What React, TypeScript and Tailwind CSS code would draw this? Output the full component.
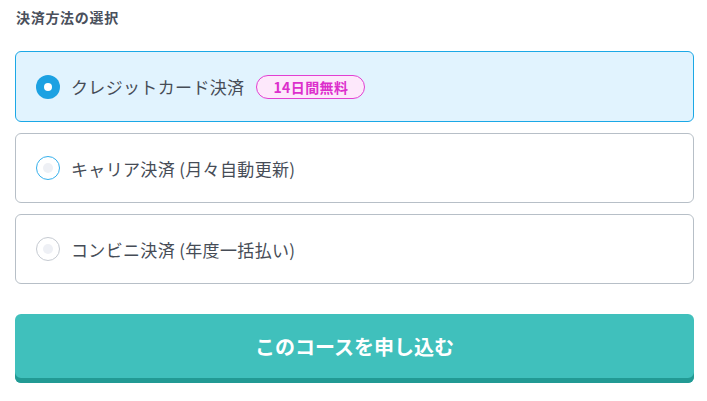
import React, { useState } from "react";

type Option = {
  id: string;
  label: string;
  badge?: string;
  disabled?: boolean;
};

const options: Option[] = [
  { id: "card", label: "クレジットカード決済", badge: "14日間無料" },
  { id: "carrier", label: "キャリア決済 (月々自動更新)" },
  { id: "cvs", label: "コンビニ決済 (年度一括払い)", disabled: true },
];

const Radio = ({ checked, disabled }: { checked: boolean; disabled?: boolean }) => {
  if (checked) {
    return (
      <span className="flex h-6 w-6 shrink-0 items-center justify-center rounded-full bg-[#1ca1e2]">
        <span className="h-2 w-2 rounded-full bg-white" />
      </span>
    );
  }
  return (
    <span
      className={
        disabled
          ? "flex h-6 w-6 shrink-0 items-center justify-center rounded-full border border-[#c5cad1] bg-white"
          : "flex h-6 w-6 shrink-0 items-center justify-center rounded-full border border-[#36b0ec] bg-white"
      }
    >
      <span className="h-2.5 w-2.5 rounded-full bg-[#eef0f5]" />
    </span>
  );
};

export default function App() {
  const [selected, setSelected] = useState("card");

  return (
    <div
      className="min-h-screen bg-white pl-[15px] pr-[13px] pt-[8px]"
      style={{ fontFamily: '"Noto Sans CJK JP", "Noto Sans", sans-serif' }}
    >
      <h2 className="pl-[1px] text-[14px] font-bold leading-[19px] tracking-[0.05em] text-[#4a505c]">
        決済方法の選択
      </h2>

      <div className="mt-[24px] flex flex-col gap-[11px]">
        {options.map((o) => {
          const active = selected === o.id;
          return (
            <button
              key={o.id}
              type="button"
              onClick={() => !o.disabled && setSelected(o.id)}
              className={
                active
                  ? "flex h-[71px] w-full items-center gap-[11px] rounded-[6px] border border-[#1ba8e6] bg-[#e1f3fe] pl-[20px] text-left"
                  : "flex h-[70px] w-full items-center gap-[11px] rounded-[6px] border border-[#b7bfc7] bg-white pl-[20px] text-left"
              }
            >
              <Radio checked={active} disabled={o.disabled} />
              <span className="text-[17px] leading-none tracking-[0.02em] text-[#464c56]">{o.label}</span>
              {o.badge && (
                <span className="ml-[1px] rounded-full border border-[#e23fd2] bg-[#fde8fb] px-[16px] py-[2px] text-[14px] font-bold leading-[18px] tracking-[0.03em] text-[#dc2fcc]">
                  {o.badge}
                </span>
              )}
            </button>
          );
        })}
      </div>

      <button
        type="button"
        className="mt-[30px] flex h-[69px] w-full items-center justify-center rounded-[6px] bg-[#40c0bc] pb-[4px] text-[20px] font-bold text-white shadow-[inset_0_-5px_0_#229a94]"
      >
        このコースを申し込む
      </button>
    </div>
  );
}
